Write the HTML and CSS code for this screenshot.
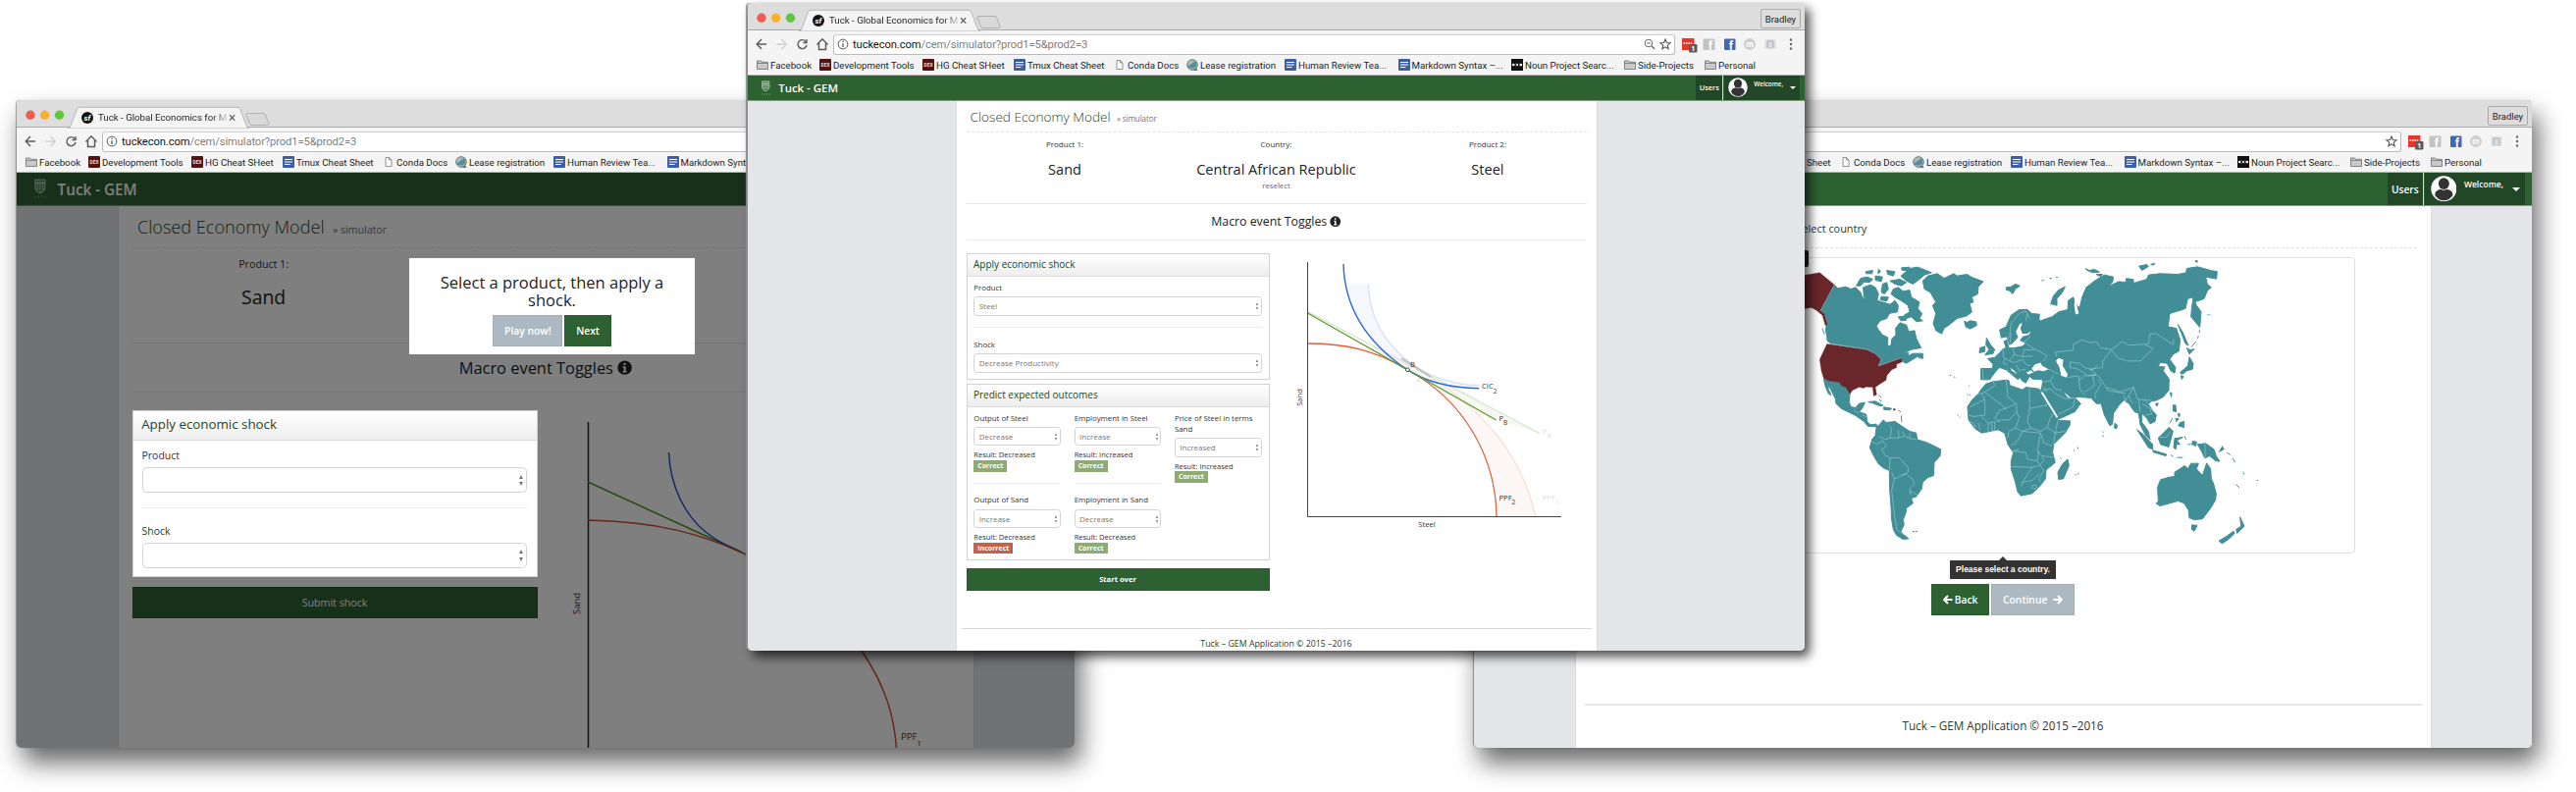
FILE: index.html
```html
<!DOCTYPE html>
<html lang="en">
<head>
<meta charset="utf-8">
<title>Tuck - Global Economics for Managers</title>
<link rel="stylesheet" href="styles.css">
</head>
<body>
<svg class="defs" width="0" height="0">
  <defs>
    <symbol id="i-folder" viewBox="0 0 12 12"><path d="M.5 10.500V2h4l1 1.300h6v7.200z" fill="#c9c9c9" stroke="#777" stroke-width=".9"/><path d="M.5 4.500h11" stroke="#777" stroke-width=".8"/></symbol>
    <symbol id="i-dex" viewBox="0 0 12 12"><rect width="12" height="12" rx="1" fill="#541313"/><text x="6" y="7.900" font-size="4.800" font-weight="700" text-anchor="middle" fill="#e8dada">DEX</text></symbol>
    <symbol id="i-doc" viewBox="0 0 12 12"><rect width="12" height="12" rx="1" fill="#3d5fa6"/><path d="M2 3.500h8M2 6h8M2 8.500h5.500" stroke="#fff" stroke-width="1.200"/></symbol>
    <symbol id="i-file" viewBox="0 0 12 12"><path d="M3 1.500h3.500L9 4v6.500H3zM6.500 1.500V4H9" fill="#fff" stroke="#777" stroke-width=".8"/></symbol>
    <symbol id="i-lease" viewBox="0 0 12 12"><circle cx="6" cy="6" r="5.300" fill="#a9bcc0" stroke="#66777a" stroke-width="1"/><path d="M3 9V6.500M5 9.500V5M7 9.500V3.500M9 8.500V2.500" stroke="#1d7180" stroke-width="1.200"/><path d="M10 9l1.500 3H7z" fill="#66777a"/></symbol>
    <symbol id="i-noun" viewBox="0 0 12 12"><rect width="12" height="12" fill="#111"/><circle cx="2.300" cy="6" r="1.300" fill="#fff"/><path d="M4.700 4.800l2.400 2.400m0-2.400L4.700 7.200" stroke="#fff" stroke-width=".9"/><rect x="8.500" y="4.900" width="2.400" height="2.300" fill="#fff"/></symbol>
    <symbol id="i-info" viewBox="0 0 14 14"><circle cx="7" cy="7" r="6.600" fill="#222"/><path d="M5.200 5.800h2.700v4.400h1v1.300H5.100v-1.300h1V7h-.9zM6 2.700h1.900v1.900H6z" fill="#fff"/></symbol>
    <symbol id="i-crest" viewBox="0 0 14 20"><path d="M2 1h10v3H2zM2 5h10v5q-1 3-5 4.500Q3 13 2 10z" fill="none" stroke="#a5c3a7" stroke-width="1.300"/><path d="M4.500 1v11M7 1v13M9.500 1v11M2 7.500h10M3 10h8" stroke="#a5c3a7" stroke-width=".9"/><path d="M1 18.500h1.500M4.500 18.500H6M8 18.500h1.500M11.500 18.500H13" stroke="#5f8f63" stroke-width="2"/></symbol>
    <symbol id="i-user" viewBox="0 0 28 28"><circle cx="14" cy="14" r="13.700" fill="#fff"/><path d="M4.500 21Q4 16 10.500 14.500q3.500 2 7 0Q24 16 23.500 21 20 26.500 14 26.500T4.500 21z" fill="#333"/><ellipse cx="14" cy="8.500" rx="5.800" ry="6.200" fill="#333"/></symbol>
  </defs>
</svg>

<template id="chrome">
  <div class="tabstrip">
    <svg class="tabs" viewBox="0 0 270 29">
      <circle cx="14" cy="15.200" r="4.700" fill="#ee5c54"/><circle cx="28.700" cy="15.200" r="4.700" fill="#f6b12f"/><circle cx="43.500" cy="15.200" r="4.700" fill="#5fc73b"/>
      <path d="M52 29q2.500-.5 3.500-4L61.500 9q1-1.700 3-1.700H225q2 0 2.700 1.700l6.300 16.500q1 3 3 3.500z" fill="#f4f4f4" stroke="#aaa" stroke-width=".8"/>
      <path d="M234.500 13.500h17.500q1 0 1.500 1.500l3.500 9q0 1.500-1.500 1.500H239q-1 0-1.500-1.500l-3.800-9z" fill="#d9d9d9" stroke="#aaa" stroke-width=".9"/>
      <circle cx="72" cy="18" r="6" fill="#111"/>
      <text x="72" y="20.800" font-size="8" font-weight="700" font-style="italic" text-anchor="middle" fill="#fff">sf</text>
      <path d="M217 15.200l5.200 5.500m0-5.500L217 20.700" stroke="#555" stroke-width="1.200"/>
    </svg>
    <span class="tabtitle">Tuck - Global Economics for M</span>
    <span class="profile">Bradley</span>
  </div>
  <div class="toolbar">
    <svg class="nav" viewBox="0 0 80 16" fill="none" stroke="#5a5a5a" stroke-width="1.400">
      <path d="M11 8H1.500M6 3L1.200 8 6 13"/><path d="M21.500 8H31M26.500 3l4.800 5-4.800 5" stroke="#d0d0d0"/>
      <path d="M51 5.200A4.500 4.500 0 1 0 52 9M52 3v3.500h-3.600"/><path d="M62.500 8.500l5.500-5.800 5.500 5.800M64.500 7v6.500h7V7"/>
    </svg>
    <div class="omnibox">
      <svg class="site" viewBox="0 0 12 12"><circle cx="6" cy="6" r="4.900" fill="none" stroke="#555"/><path d="M6 5.200v3.700M6 2.800v1.300" stroke="#555" stroke-width="1.300"/></svg>
      <span class="url"><b>tuckecon.com</b><span class="path"></span></span>
      <svg class="lens" viewBox="0 0 12 12" fill="none" stroke="#666"><circle cx="5" cy="5" r="3.800"/><path d="M3.200 5h3.600M8 8l3.300 3" stroke-width="1.200"/></svg>
      <svg class="star" viewBox="0 0 12 12"><path d="M6 1l1.400 3.500 3.600.3-2.800 2.400.9 3.600L6 8.900l-3.100 1.900.9-3.600L1 4.800l3.600-.3z" fill="none" stroke="#555" stroke-width="1.100"/></svg>
    </div>
    <svg class="ext" viewBox="0 0 126 18">
      <rect x="7" y="3" width="12.500" height="12" fill="#e8352c"/><path d="M8.500 8h9.500" stroke="#fff" stroke-width="1.500" stroke-dasharray="1.600 .8"/>
      <rect x="14" y="9" width="8.500" height="8.500" rx="1" fill="#5b5b5b"/><text x="18.200" y="16.200" font-size="8" font-weight="700" text-anchor="middle" fill="#fff">1</text>
      <rect x="28.500" y="3.500" width="12" height="11.500" rx="1" fill="#c3c3c3"/><text x="36" y="15" font-size="12" font-weight="700" text-anchor="middle" fill="#fff">f</text>
      <rect x="50" y="3.500" width="11.500" height="11.500" rx="1" fill="#4267b0"/><text x="57" y="15" font-size="12" font-weight="700" text-anchor="middle" fill="#fff">f</text>
      <circle cx="76" cy="9" r="6" fill="#cfcfcf"/><text x="76" y="12" font-size="8.500" font-weight="700" text-anchor="middle" fill="#fff">m</text>
      <rect x="91.500" y="4" width="11" height="10" rx="1.500" fill="#ddd"/><rect x="93.500" y="5.500" width="7" height="7" rx="1" fill="#bbb"/><text x="97" y="11.500" font-size="6.500" text-anchor="middle" fill="#fff">B</text>
      <g fill="#666"><circle cx="118" cy="4.500" r="1.200"/><circle cx="118" cy="9" r="1.200"/><circle cx="118" cy="13.500" r="1.200"/></g>
    </svg>
  </div>
  <div class="bookmarks"></div>
</template>

<div class="window window--back window--left">
  <header class="chrome" data-path="/cem/simulator?prod1=5&amp;prod2=3"></header>
  <div class="page">
    <nav class="navbar"><svg class="crest"><use href="#i-crest"/></svg><span class="brand">Tuck - GEM</span></nav>
    <main class="sheet">
      <h1 class="title">Closed Economy Model <small>» simulator</small></h1>
      <section class="trio">
        <div><p>Product 1:</p><h2>Sand</h2></div><div></div><div></div>
      </section>
      <h3 class="macro">Macro event Toggles <svg><use href="#i-info"/></svg></h3>
      <div class="work">
        <div class="forms">
          <section class="panel panel--lit">
            <h4>Apply economic shock</h4>
            <div class="group"><label>Product</label><span class="select"></span></div>
            <div class="group"><label>Shock</label><span class="select"></span></div>
          </section>
          <button class="btn btn--wide">Submit shock</button>
        </div>
        <svg class="chart chart--left" viewBox="560 418 422 344" fill="none">
          <path d="M599.500 430V762" stroke="#222" stroke-width="1.500"/>
          <path d="M599 491L756 563" stroke="#54901f" stroke-width="1.500"/>
          <path d="M681.500 461C683 498 700 527 719 542S745 556 756 563" stroke="#1e55cf" stroke-width="1.500"/>
          <path d="M599 530C670 531 716 545 756 563C810 588 850 620 878 663C903 700 911 730 913.500 762" stroke="#cc4c30" stroke-width="1.500"/>
          <text x="918" y="754" font-size="9.500">PPF<tspan dy="6" font-size="8">1</tspan></text>
          <text transform="translate(591 626) rotate(-90)" font-size="9.500">Sand</text>
        </svg>
      </div>
    </main>
    <div class="shade"></div>
    <div class="tour">
      <p>Select a product, then apply a shock.</p>
      <div class="actions"><button class="btn btn--muted">Play now!</button><button class="btn">Next</button></div>
    </div>
  </div>
</div>

<div class="window window--back window--right">
  <header class="chrome" data-path="/cem/country"></header>
  <div class="page">
    <nav class="navbar"><svg class="crest"><use href="#i-crest"/></svg><span class="brand">Tuck - GEM</span>
      <a class="users">Users</a><a class="account"><svg class="avatar"><use href="#i-user"/></svg><span>Welcome,</span><i></i></a></nav>
    <main class="sheet">
      <h1 class="title title--step">Select country</h1>
      <div class="mapbox">
        <svg class="map" viewBox="-441 70.500 2151 901.500">
          <g class="land">
            <path d="M115 152L125 163 150 158 165 165 180 160 195 175 200 190 225 208 245 200 262 205 285 212 300 200 310 215 308 235 290 238 283 240 275 255 255 262 243 278 250 290 262 305 278 313 278 340 288 337 290 318 303 305 302 285 315 268 335 275 342 295 360 292 365 315 380 345 350 350 325 362 342 360 340 370 355 362 385 362 385 378 368 372 335 392 325 388 320 375 300 382 275 390 252 400 248 395 258 380 240 362 215 350 105 332 95 325 88 290 92 270 88 245 72 232z"/>
            <path d="M182 155L195 132 215 128 232 135 222 145 205 143 195 155zM203 160L225 152 240 160 250 180 245 202 222 208 205 190zM210 112L232 108 230 118 212 118zM240 125L262 128 258 142 240 138zM250 104L256 112 248 118zM275 108L300 112 295 125 278 120zM262 150L275 145 280 165 268 180 258 175zM285 140L315 135 335 145 320 155 300 150zM320 100L345 98 340 108 322 108zM345 102L370 98 412 115 390 122 375 135 355 150 335 140 318 125 330 115zM295 165L310 160 325 172 345 168 350 190 375 205 370 225 383 240 375 255 385 262 365 265 350 250 335 255 328 245 345 235 340 215 318 200 300 190 288 180zM258 188L280 190 275 202 255 198zM310 250L330 248 335 260 318 262z"/>
            <path d="M385 140L400 125 430 118 450 132 480 118 490 125 520 120 537 130 570 142 555 158 553 180 535 190 540 205 528 208 535 235 520 247 490 255 465 275 450 285 443 302 425 292 417 270 425 240 415 215 425 205 408 175 390 165zM512 263L520 267 530 262 548 265 550 276 530 287 516 280z"/>
            <path d="M82 440L95 445 130 450 138 462 150 465 162 486 160 510 165 525 180 528 190 515 208 512 200 530 190 540 212 548 215 570 225 580 243 578 250 588 240 586 218 585 205 570 180 552 160 542 135 530 120 515 118 500 100 465 98 452 96 470 105 490 97 485 88 465zM218 510L240 508 264 521 255 523 232 514zM266 526L290 530 285 535 266 533z"/>
            <path d="M243 590L265 565 272 573 300 570 330 590 345 600 365 605 368 625 400 635 440 655 438 675 420 695 418 735 400 742 385 755 382 775 365 800 350 804 355 820 335 835 333 850 325 870 328 885 318 905 325 915 342 928 325 930 305 918 295 900 290 870 288 830 284 780 283 720 265 712 250 700 235 675 223 650 230 625 240 612z"/>
            <path d="M578 455L600 448 640 443 648 445 652 460 690 473 700 465 740 470 748 482 765 515 795 550 798 567 835 568 835 580 820 605 785 640 782 665 790 695 762 718 760 745 745 765 720 790 685 797 675 785 668 755 655 715 655 690 662 665 645 640 640 620 635 605 615 595 590 600 565 605 545 592 525 565 522 525 535 505 555 485 565 470zM828 685L832 705 815 745 800 747 798 725 812 700z"/>
            <path d="M563 408L598 408 600 395 583 378 605 374 620 360 630 348 640 345 633 325 642 320 648 345 665 345 690 340 700 330 683 322 690 312 712 305 717 290 717 250 745 262 780 250 800 235 828 228 830 200 845 190 855 215 865 222 872 190 885 160 910 140 940 122 968 128 965 145 950 158 985 142 1005 145 1007 133 1028 135 1030 147 1070 135 1075 122 1110 118 1165 120 1190 115 1192 102 1225 97 1265 108 1285 112 1283 134 1250 128 1255 150 1267 160 1255 170 1245 195 1215 205 1210 190 1195 195 1188 225 1140 240 1135 280 1160 285 1172 320 1168 355 1150 365 1140 380 1158 405 1155 422 1143 415 1132 392 1110 390 1105 402 1125 403 1120 415 1138 440 1137 475 1120 495 1100 505 1085 508 1075 515 1085 535 1099 550 1095 570 1080 577 1070 560 1055 545 1055 572 1075 600 1080 625 1065 610 1050 580 1045 545 1032 540 1015 515 1000 505 985 520 968 545 965 578 957 583 940 550 930 515 915 515 900 498 865 495 840 498 812 475 825 495 835 500 850 498 868 515 850 540 800 563 770 515 745 480 750 460 752 442 720 440 708 428 725 420 716 412 700 420 712 432 700 452 688 445 672 420 652 402 655 415 683 432 676 442 640 412 620 405 610 415 598 430 590 442 563 442z"/>
            <path d="M620 290L640 280 655 245 680 228 705 228 718 240 742 242 740 262 717 250 717 290 705 300 690 300 685 285 692 265 680 272 668 295 675 312 660 330 650 335 643 310 625 314zM580 315L586 325 592 335 605 350 600 362 575 367 588 350 578 335zM560 345L575 340 575 356 558 360z"/>
            <path d="M776 210L785 185 800 168 820 158 812 175 795 195 795 215zM640 160L655 158 668 150 682 155 668 165 660 180 650 170 640 168zM882 103L895 108 910 105 925 113 905 115 888 108zM915 120L935 120 928 127zM1046 95L1070 90 1075 96 1055 108zM1082 90L1095 86 1090 92zM1218 78L1226 80 1222 84zM748 140L755 138M772 133L780 132M792 130L798 129M1213 182L1220 212 1236 235 1232 282 1205 250 1207 225zM1165 273L1180 298 1197 338 1188 332zM1192 345L1203 352 1215 348 1200 364zM1200 373L1212 393 1210 410 1192 415 1178 426 1172 420 1195 400zM1174 430L1182 432 1177 441zM1141 482L1146 482 1145 495zM1096 516L1105 514 1101 523zM972 575L980 582 977 592 971 590zM1150 520L1158 520 1160 540 1150 538zM1165 545L1172 548 1168 556zM1158 560L1168 562 1160 570zM1172 573L1184 570 1184 588 1166 583zM1148 560L1140 575M1040 595L1060 610 1088 640 1088 655 1075 650zM1088 658L1130 670 1128 675 1090 664zM1105 620L1138 588 1150 600 1142 630 1137 648 1112 640zM1155 622L1180 618 1162 628 1172 640 1162 638 1158 655 1152 650zM1185 615L1190 625M1195 640L1205 640M1210 630L1222 632 1220 645 1208 640zM1225 640L1250 637 1275 655 1282 675 1293 692 1280 690 1262 675 1247 682 1238 662zM1290 663L1305 655 1300 645M1315 665L1325 672M1332 682L1340 695M1143 672L1150 677M1162 680L1180 680M1343 762L1352 772M1364 725L1368 732M1407 750L1411 750"/>
            <path d="M1103 770L1112 748 1138 740 1155 738 1155 725 1175 712 1185 705 1196 714 1205 698 1228 698 1222 715 1240 735 1253 697 1265 715 1267 745 1274 760 1282 790 1280 810 1265 835 1240 868 1215 870 1200 865 1197 840 1190 830 1185 820 1165 813 1140 820 1110 828 1098 820 1105 815zM1208 886L1224 888 1215 905 1207 900zM1355 862L1368 890 1346 912 1343 900 1358 890zM1290 935L1315 920 1335 905 1338 912 1320 930 1300 943z"/>
            <path d="M250 490l8 6M252 503l6 5M310 535l8 6M319 552l2 20M467 428l5 2M480 433l4 2M525 460l3 2M520 487l4 1M528 489l4 1M491 550l3 2M497 556l3 2M935 600l2 4M935 612l2 5M858 648l2 6M846 658l3 1M850 733l4-1M858 730l4-1M805 681l4 3M1255 243l4 1M1262 244l3 0M1231 290v8M1228 308l-3 8M1220 326l-14 16M354 906h6M364 906h5M78 285l6 18M90 315l6 10M1300 650l6 4"/>
          </g>
          <g class="sea">
            <path d="M718 408L728 395 745 390 750 400 770 410 755 416 738 413 725 418zM792 385L800 376 815 382 812 398 828 425 825 436 808 430 803 405zM745 480L752 480 798 555 795 560zM850 190L856 215 862 240 852 242 848 215z"/>
          </g>
          <g class="usa">
            <path d="M-60 120L27 122 70 115 115 152 72 232 85 242 93 275 87 276 78 245 60 230 45 222 27 224 0 230-60 250z"/>
            <path d="M92 333L215 350 240 362 258 380 250 400 300 382 320 375 322 388 305 395 305 405 290 412 275 430 273 443 250 458 240 465 244 488 235 492 232 465 210 464 205 468 190 465 170 475 162 486 150 465 138 462 130 450 95 445 82 438 75 415 70 380z"/>
            <circle cx="298" cy="533" r="3"/>
          </g>
          <g class="borders">
            <path d="M115 152L72 232M105 332L215 350 240 362 258 380 250 400 300 382 320 375"/>
            <path d="M250 615L270 625 285 620 290 590 280 580M285 620L312 620 310 595M312 620L330 615 345 622 365 625M330 615L322 600M345 622L345 605M228 630L245 640 262 628 275 645 260 655 270 672 285 682 283 720M285 682L312 680 340 710 340 725 320 735 312 740 298 745 290 725M320 735L335 730 355 748 360 760 345 775M298 745L290 780 298 850 305 900 325 915M345 775L348 795M345 782L370 795M175 535L190 545M200 550L212 555"/>
            <path d="M600 448L605 460 575 480 545 490M565 485L575 502 530 525M575 502L575 550 540 555 525 550M575 480L640 530 670 515 645 495 640 443M640 530L620 535 605 560 620 570M711 470L712 530 765 520 760 518M671 515L672 540 650 565 625 565 610 570M712 530L705 570 715 590 745 600 765 588 775 560 785 545M672 540L680 560 668 590 690 600 715 590M668 590L648 600 645 620M690 600L680 620 665 640 655 640M690 600L745 605 740 635 735 660 750 675M680 655L660 660 700 665 705 685 735 690 740 660M655 708L720 710 690 755 688 768M720 710L740 705 755 690 750 675 785 680M735 690L755 720 740 745 745 755M690 755L720 750 742 730M718 770a8 6 0 1 0 16 0a8 6 0 1 0-16 0M745 605L755 635 780 645M765 588L790 605 820 600M798 567L790 605 785 640M585 575V600M595 572L598 598M605 570V597M555 575L560 595M530 570L545 580 545 592M565 555L585 575 605 570"/>
            <path d="M700 330L720 345 750 360 765 370 755 385M660 345L665 365 690 372 720 370M630 350L632 375 650 385 665 365M650 385L665 390 690 380 700 395 715 400M670 395L680 415 700 410M640 375L630 390 645 398M715 310L690 330M690 372L695 350 725 352M650 315L655 270 680 240M705 240L700 262M655 300L652 330M568 410L570 440M680 240L700 232 712 255"/>
            <path d="M795 372L790 358 845 352 845 335 870 320 900 330 915 325 930 345 962 350 995 325 1015 337 1075 333 1080 302 1100 302 1150 335 1152 320M962 350L935 385 935 405 895 410M962 350L980 375 1010 385 1050 385 1090 347 1065 335M835 388L865 392 880 405 905 412 920 398M835 388L835 405 860 410 890 430 915 425 895 410M830 435L862 430 865 470 880 490M862 445L880 430 905 430 910 460 880 480M905 430L920 428 945 465 990 480 1030 465 1040 500 1060 505 1085 505M920 440L930 455 910 490 915 500M945 465L950 475 1005 485M1000 490L1005 508 1015 490M1030 465L1015 490 1025 515M1045 500L1050 540M1055 515L1080 530 1085 548 1065 550M1062 500L1090 535M770 410L800 425M752 450L775 445 790 470 810 475M775 445L785 430M752 475L775 470 790 485 820 500 850 498M850 500L845 525 800 548M1248 638V682M1110 618L1130 618 1142 600M755 465L765 480"/>
          </g>
        </svg>
        <span class="country-tip">United States of America</span>
      </div>
      <div class="prompt">Please select a country.</div>
      <div class="actions"><button class="btn"><svg viewBox="0 0 10 10"><path d="M9.500 5H1.500M5 1L1.200 5 5 9"/></svg>Back</button><button class="btn btn--muted">Continue<svg class="fwd" viewBox="0 0 10 10"><path d="M.5 5h8M5 1l3.800 4L5 9"/></svg></button></div>
      <footer class="foot foot--big"><b>Tuck – GEM</b> Application © 2015 –2016</footer>
    </main>
  </div>
</div>

<div class="window window--front">
  <header class="chrome" data-path="/cem/simulator?prod1=5&amp;prod2=3"></header>
  <div class="page page--small">
    <nav class="navbar"><svg class="crest"><use href="#i-crest"/></svg><span class="brand">Tuck - GEM</span>
      <a class="users">Users</a><a class="account"><svg class="avatar"><use href="#i-user"/></svg><span>Welcome,</span><i></i></a></nav>
    <main class="sheet">
      <h1 class="title">Closed Economy Model <small>» simulator</small></h1>
      <section class="trio">
        <div><p>Product 1:</p><h2>Sand</h2></div>
        <div><p>Country:</p><h2>Central African Republic</h2><a>reselect</a></div>
        <div><p>Product 2:</p><h2>Steel</h2></div>
      </section>
      <h3 class="macro">Macro event Toggles <svg><use href="#i-info"/></svg></h3>
      <div class="work">
        <div class="forms">
          <section class="panel">
            <h4>Apply economic shock</h4>
            <div class="group"><label>Product</label><span class="select">Steel</span></div>
            <div class="group"><label>Shock</label><span class="select">Decrease Productivity</span></div>
          </section>
          <section class="panel panel--outcomes">
            <h4>Predict expected outcomes</h4>
            <div class="outcomes">
              <div>
                <div class="group"><label>Output of Steel</label><span class="select">Decrease</span><p>Result: Decreased</p><em>Correct</em></div>
                <div class="group"><label>Output of Sand</label><span class="select">Increase</span><p>Result: Decreased</p><em class="bad">Incorrect</em></div>
              </div>
              <div>
                <div class="group"><label>Employment in Steel</label><span class="select">Increase</span><p>Result: Increased</p><em>Correct</em></div>
                <div class="group"><label>Employment in Sand</label><span class="select">Decrease</span><p>Result: Decreased</p><em>Correct</em></div>
              </div>
              <div>
                <div class="group"><label>Price of Steel in terms Sand</label><span class="select">Increased</span><p>Result: Increased</p><em>Correct</em></div>
              </div>
            </div>
          </section>
          <button class="btn btn--wide btn--bold">Start over</button>
        </div>
        <svg class="chart chart--front" viewBox="1310 258 307 290" fill="none">
          <path d="M1369 269C1370 316 1394 350 1434 376.700C1456 391 1480 395.500 1507 395.700V392.700C1480 392 1458 385 1436.500 369.300C1410 349 1395 322 1394.300 289.300H1371.500z" fill="#f6f8fe"/>
          <path d="M1434 376.700C1500 409 1525 465 1525 526H1564.600C1551 464 1512 412 1425.700 366.700z" fill="#fdf8f6"/>
          <path d="M1434 376.700L1524.600 428 1568.600 441.300 1425.700 364z" fill="#f4f8f0"/>
          <path d="M1394.300 289.300C1395 322 1410 349 1436.500 369.300C1458 385 1480 392 1507 392.700" stroke="#d5dffa" stroke-width="1.300"/>
          <path d="M1332.500 317.300L1568.600 441.300" stroke="#d9e8cf" stroke-width="1.300"/>
          <path d="M1332.500 350C1362 350 1397 354 1425.700 366.700C1505 406 1550 460 1564.600 526" stroke="#f7dcd5" stroke-width="1.200"/>
          <path d="M1428 365L1458 384" stroke="#bbb" stroke-width="1.500"/>
          <path d="M1332.500 350C1370 350 1402 357 1434 376.700C1492 408 1524 465 1525 526" stroke="#e2623f" stroke-width="1.300"/>
          <path d="M1369 269C1370 316 1394 350 1434 376.700C1456 391 1480 395.500 1507 395.700" stroke="#2a66e8" stroke-width="1.400"/>
          <path d="M1332.500 319L1524.600 428" stroke="#5b9a2a" stroke-width="1.400"/>
          <path d="M1332.500 267V526.500H1591" stroke="#444"/>
          <circle cx="1434.300" cy="376.700" r="1.900" fill="#fff" stroke="#333" stroke-width=".9"/>
          <g font-size="7.600">
            <text x="1437" y="374">B</text><text x="1443" y="390" class="ghost">A</text>
            <text x="1510" y="396">CIC<tspan dy="5" font-size="6.500">2</tspan></text>
            <text x="1527.500" y="429">P<tspan dy="4" font-size="6.500">B</tspan></text>
            <text x="1572" y="442" class="ghost">P<tspan dy="4" font-size="6.500">A</tspan></text>
            <text x="1527.500" y="510">PPF<tspan dy="4" font-size="6.500">2</tspan></text>
            <text x="1572" y="510" class="ghost">PPF<tspan dy="4" font-size="6.500">1</tspan></text>
            <text x="1454" y="536.500" text-anchor="middle">Steel</text>
            <text transform="translate(1326.500 405) rotate(-90)" text-anchor="middle">Sand</text>
          </g>
        </svg>
      </div>
      <footer class="foot"><b>Tuck – GEM</b> Application © 2015 –2016</footer>
    </main>
  </div>
</div>
<script src="script.js"></script>
</body>
</html>
```
FILE: styles.css
```css
* { box-sizing: border-box; margin: 0; }
body { width: 2625px; height: 807px; background: #fff; position: relative; overflow: hidden; font-family: "Open Sans", sans-serif; color: #333; }
.defs { position: absolute; }
button { font: inherit; }

.window { position: absolute; isolation: isolate; width: 1078px; height: 660px; border-radius: 4px 4px 5px 5px; display: flex; flex-direction: column; overflow: hidden; background: #f4f4f4; }
.window--left { left: 17px; top: 102px; }
.window--right { left: 1502px; top: 102px; }
.window--back { box-shadow: 6px 15px 26px rgba(0,0,0,.6), -1px 0 1px #aaa; }
.window--front { left: 762px; top: 3px; width: 1077px; box-shadow: 5px 6px 11px rgba(0,0,0,.7), -2px 0 1px #999; }

/* browser chrome */
.chrome { flex: none; height: 74px; font-family: Roboto, sans-serif; color: #1c1c1c; border-bottom: 1px solid #b4b4b4; border-top: 1px solid #8e8e8e; }
.chrome svg text { font-family: Roboto, sans-serif; }
.tabstrip { height: 28px; margin-top: -1px; display: flex; align-items: center; background: #dcdddc; border-bottom: 1px solid #aaa; position: relative; }
.tabs { width: 270px; height: 29px; flex: none; margin-bottom: -1px; }
.tabtitle { position: absolute; left: 83px; top: 10px; overflow: hidden; white-space: nowrap; font-size: 9.700px; line-height: 16px; background: linear-gradient(90deg, #1c1c1c 88%, #ccc); background-clip: text; color: transparent; }
.profile { margin-left: auto; margin-right: 4px; margin-top: 4px; width: 41px; height: 20px; border: 1px solid #aaa; border-radius: 2px; font-size: 9.500px; line-height: 19px; text-align: center; }
.toolbar { height: 28px; display: flex; align-items: center; padding-left: 8px; }
.nav { width: 80px; height: 16px; flex: none; }
.omnibox { flex: none; width: 858px; height: 21px; margin-left: -1px; background: #fff; border: 1px solid #bbb; border-top-color: #d0d0d0; border-radius: 3px; display: flex; align-items: center; padding: 0 3px 0 3px; gap: 4px; }
.site { width: 12px; height: 12px; }
.url { font-size: 11.200px; color: #808080; white-space: nowrap; letter-spacing: -.1px; }
.url b { font-weight: 400; color: #111; }
.lens, .star { width: 12px; height: 12px; }
.lens { margin-left: auto; visibility: hidden; }
.window--front .lens { visibility: visible; }
.ext { flex: none; width: 126px; height: 18px; }
.bookmarks { height: 14px; display: flex; align-items: center; padding-left: 9px; }
.bm { display: flex; align-items: center; gap: 2px; font-size: 9.700px; white-space: nowrap; flex: none; }
.bm svg { width: 12px; height: 12px; flex: none; }

/* application page; back windows use a larger type scale than the front one */
.page { flex: 1; min-height: 0; position: relative; background: #e3e5e9; font-size: 10.667px; display: flex; flex-direction: column; }
.page--small { font-size: 8px; }
.navbar { flex: none; height: 3.200em; background: #2d6132; border-bottom: 1px solid #7d9c80; display: flex; align-items: center; padding-left: 1.600em; color: #fff; }
.crest { width: 1.300em; height: 1.900em; }
.brand { font-size: 1.430em; font-weight: 600; margin-left: .7em; }
.users { margin-left: auto; flex: none; width: 3.600em; height: 100%; background: #224726; text-align: center; font-size: 10.200px; font-weight: 600; border-right: 1px solid #cdd; display: grid; place-items: center; }
.page--small .users { font-size: 7.400px; width: 28px; }
.account { flex: none; height: 100%; width: 9.600em; background: #224726; display: flex; align-items: center; padding-left: .55em; margin-right: .65em; margin-left: .1em; font-weight: 600; }
.avatar { width: 2.500em; height: 2.500em; flex: none; }
.account span { font-size: .8em; margin: -1.100em 1em 0 .9em; }
.account i { border: .4em solid transparent; border-top-color: #fff; border-bottom: 0; }
.sheet { width: 873px; flex: 1; min-height: 0; margin: 0 auto; padding: 0 14px; background: #fff; border: solid #d9dbde; border-width: 0 1px; display: flex; flex-direction: column; }
.page--small .sheet { width: 654px; padding: 0 10px; }
.title { flex: none; height: 2.380em; border-bottom: 1px dashed #e2e2e2; font-size: 1.700em; font-weight: 300; line-height: 2.330em; color: #1f4527; padding-left: .3em; }
.title small { font-size: .6em; font-weight: 400; color: #6c7586; margin-left: .35em; letter-spacing: -.15px; }
.title.title--step { font-size: 10.900px; height: 43px; font-weight: 400; line-height: 46px; padding-left: 211px; color: #1d3d25; }
.trio { flex: none; display: grid; grid-template-columns: repeat(3, 1fr); margin: 0 -.9em; height: 9.100em; text-align: center; position: relative; }
.trio::after { content: ""; position: absolute; left: .9em; right: .9em; bottom: 0; border-bottom: 1px solid #e6e6e6; }
.trio p { margin-top: .7em; line-height: 1.600em; }
.trio h2 { font-size: 1.820em; font-weight: 400; line-height: 1.400em; margin-top: .6em; color: #222; }
.trio a { display: block; color: #4c6a9a; line-height: 1.600em; margin-top: .1em; font-size: .97em; }
.macro { flex: none; display: flex; justify-content: center; align-items: center; gap: .25em; font-size: 1.540em; font-weight: 400; height: 3em; color: #222; border-bottom: 1px solid #ececec; }
.macro svg { width: .93em; height: .93em; }
.work { display: flex; padding-top: 1.700em; }
.forms { width: 413px; flex: none; }
.page--small .forms { width: 309px; }
.panel { border: 1px solid #d2d2d2; background: #fff; margin-bottom: .5em; }
.panel--lit { position: relative; z-index: 3; }
.panel h4 { font-size: 1.250em; font-weight: 400; color: #1f4526; height: 2.280em; line-height: 2.050em; padding-left: .65em; background: linear-gradient(#fff, #ededed); border-bottom: 1px solid #dcdcdc; }
.group { margin: 0 .85em; padding: .75em 0 .75em; }
.group + .group { padding-top: 1.450em; border-top: 1px solid #ebebeb; }
.group:has(+ .group) { padding-bottom: 1.400em; }
.group label { display: block; line-height: 1.450em; padding-bottom: .38em; color: #333; font-size: .98em; }
.select { display: block; position: relative; height: 2.450em; border: 1px solid #d4d4d4; border-radius: .4em; line-height: 2.200em; padding-left: .55em; color: #777; background: #fff; }
.select::before, .select::after { content: ""; position: absolute; right: .35em; border: .24em solid transparent; }
.select::before { top: .6em; border-bottom: .42em solid #777; border-top: 0; }
.select::after { bottom: .6em; border-top: .42em solid #777; border-bottom: 0; }
.outcomes { display: grid; grid-template-columns: repeat(3, 1fr); }
.outcomes .group label { white-space: nowrap; }
.outcomes > div:nth-child(3) .group label { white-space: normal; }
.outcomes p { line-height: 1.300em; margin-top: .65em; font-size: 7.500px; }
.outcomes em { display: table; font-style: normal; font-weight: 700; font-size: 7px; line-height: 11.500px; padding: 0 4px; color: #fff; background: #8dab72; }
.outcomes em.bad { background: #c5604d; }
.btn { border: 1px solid rgba(0,0,0,.06); background: #2d6132; color: #fff; height: 2.950em; padding: 0 1.050em; font-weight: 600; display: inline-flex; align-items: center; justify-content: center; }
.actions .btn { font-size: 10.300px; height: 32px; }
.btn--muted { background: #adb9c2; }
.btn--wide { width: 100%; font-weight: 400; margin-top: .45em; }
.btn--bold { font-weight: 700; font-size: 7.600px; height: 23px; }
.btn svg { width: 10px; height: 10px; fill: none; stroke: #fff; stroke-width: 2; margin-right: 2px; }
.btn .fwd { margin: 0 0 0 6px; }
.chart { flex: none; font-family: "Open Sans", sans-serif; }
.chart text { fill: #333; }
.chart text.ghost { fill: #ddd; }
.chart--left { width: 422px; height: 344px; margin-left: 12px; }
.chart--front { width: 307px; height: 290px; margin-left: 16px; }
.foot { flex: none; margin: auto -5px 0; height: 23px; border-top: 1px solid #d8d8d8; text-align: center; font-size: 8.800px; line-height: 31px; color: #333; }
.foot b { font-weight: 400; color: #1f4526; }
.foot--big { height: 45px; border-top: 2px solid #e6e6e6; font-size: 11.700px; line-height: 41px; }

/* guided tour */
.shade { position: absolute; inset: 0; background: rgba(0,0,0,.5); z-index: 2; }
.tour { position: absolute; z-index: 4; left: 400px; top: 87px; width: 291px; height: 98px; background: #fff; text-align: center; padding-top: 16px; }
.tour p { font-size: 16.500px; line-height: 18px; padding: 0 25px; color: #222; margin-bottom: 6px; }
.actions { display: flex; justify-content: center; gap: 2px; }

/* country picker */
.mapbox { position: relative; flex: none; width: 717px; height: 302px; margin: 9px 0 0 63px; border: 1px solid #e0e0e0; border-radius: 4px; }
.map { display: block; width: 717px; height: 300.500px; }
.land path { fill: #418e97; stroke: #418e97; stroke-width: 3; stroke-linejoin: bevel; }
.sea path { fill: #fff; }
.usa path, .usa circle { fill: #69262b; stroke: #69262b; stroke-width: 1; }
.borders path { fill: none; stroke: #93c8cc; stroke-width: 2; stroke-linejoin: round; }
.country-tip { position: absolute; right: 556px; top: -8px; height: 17px; background: #1f1f1f; color: #fff; border-radius: 2px; font-size: 10px; line-height: 16px; padding: 0 3px; white-space: nowrap; }
.prompt { position: relative; flex: none; align-self: center; margin: 7px 0 5px; height: 19px; width: 108px; background: #333; color: #fff; font: 700 8.500px/18px "Liberation Sans", sans-serif; text-align: center; white-space: nowrap; }
.prompt::before { content: ""; position: absolute; left: 50%; top: -4px; margin-left: -4px; border: 4px solid transparent; border-top: 0; border-bottom-color: #333; }
```
FILE: script.js
```js
// Bookmark bar entries: icon, label, width of the whole entry in px.
const bookmarks = [
  ["folder", "Facebook", 64], ["dex", "Development Tools", 105], ["dex", "HG Cheat SHeet", 93],
  ["doc", "Tmux Cheat Sheet", 102], ["file", "Conda Docs", 74], ["lease", "Lease registration", 100],
  ["doc", "Human Review Tea...", 115.5], ["doc", "Markdown Syntax –...", 115.5],
  ["noun", "Noun Project Searc...", 115], ["folder", "Side-Projects", 82], ["folder", "Personal", 60]
];
const chrome = document.getElementById("chrome");
document.querySelectorAll(".chrome").forEach(host => {
  host.append(chrome.content.cloneNode(true));
  host.querySelector(".path").textContent = host.dataset.path;
  host.querySelector(".bookmarks").innerHTML = bookmarks.map(([icon, label, width]) =>
    `<span class="bm" style="width:${width}px"><svg><use href="#i-${icon}"/></svg><span>${label}</span></span>`).join("");
});
```
